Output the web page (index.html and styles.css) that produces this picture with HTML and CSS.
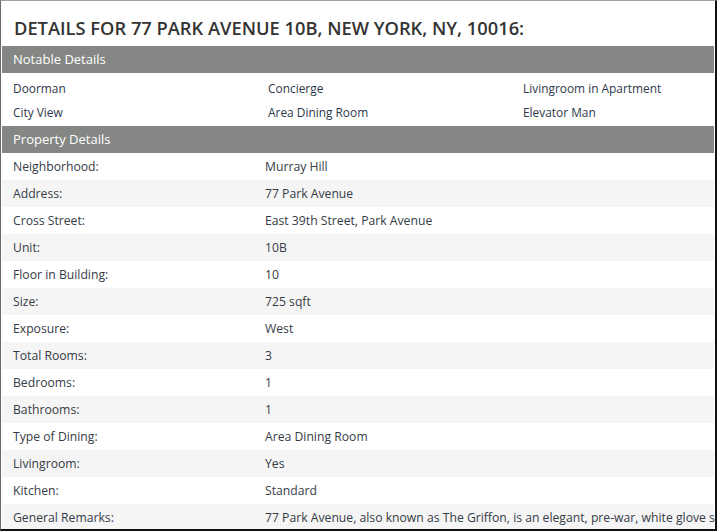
FILE: index.html
```html
<!DOCTYPE html>
<html>
<head>
<meta charset="utf-8">
<link rel="stylesheet" href="styles.css">
</head>
<body>
<div class="frame">
  <h1 class="title">DETAILS FOR 77 PARK AVENUE 10B, NEW YORK, NY, 10016:</h1>
  <div class="bar">Notable Details</div>
  <div class="notable">
    <div>Doorman</div><div>Concierge</div><div>Livingroom in Apartment</div>
    <div>City View</div><div>Area Dining Room</div><div>Elevator Man</div>
  </div>
  <div class="bar">Property Details</div>
  <div class="props">
    <div class="row"><div class="k">Neighborhood:</div><div class="v">Murray Hill</div></div>
    <div class="row"><div class="k">Address:</div><div class="v">77 Park Avenue</div></div>
    <div class="row"><div class="k">Cross Street:</div><div class="v">East 39th Street, Park Avenue</div></div>
    <div class="row"><div class="k">Unit:</div><div class="v">10B</div></div>
    <div class="row"><div class="k">Floor in Building:</div><div class="v">10</div></div>
    <div class="row"><div class="k">Size:</div><div class="v">725 sqft</div></div>
    <div class="row"><div class="k">Exposure:</div><div class="v">West</div></div>
    <div class="row"><div class="k">Total Rooms:</div><div class="v">3</div></div>
    <div class="row"><div class="k">Bedrooms:</div><div class="v">1</div></div>
    <div class="row"><div class="k">Bathrooms:</div><div class="v">1</div></div>
    <div class="row"><div class="k">Type of Dining:</div><div class="v">Area Dining Room</div></div>
    <div class="row"><div class="k">Livingroom:</div><div class="v">Yes</div></div>
    <div class="row"><div class="k">Kitchen:</div><div class="v">Standard</div></div>
    <div class="row"><div class="k">General Remarks:</div><div class="v">77 Park Avenue, also known as The Griffon, is an elegant, pre-war, white glove s</div></div>
  </div>
</div>
</body>
</html>
```
FILE: styles.css
```css
html, body {
  margin: 0;
  padding: 0;
  background: #fff;
}
.frame {
  box-sizing: border-box;
  width: 717px;
  height: 531px;
  border-left: 1px solid #6b6b6b;
  border-top: 1px solid #a0a0a0;
  border-right: 2px solid #111;
  border-bottom: 2px solid #111;
  padding: 0 1px 0 1px;
  overflow: hidden;
  font-family: "Open Sans", "Noto Sans", sans-serif;
  color: #3a4150;
}
.title {
  margin: 0;
  height: 45px;
  box-sizing: border-box;
  padding: 15px 0 0 12px;
  font-size: 18.3px;
  font-weight: 600;
  color: #333;
  line-height: 24px;
  white-space: nowrap;
}
.bar {
  height: 27px;
  line-height: 27px;
  background: #858784;
  color: #fff;
  font-size: 13px;
  padding-left: 11px;
}
.notable {
  display: grid;
  grid-template-columns: 255px 255px 255px;
  padding: 3px 0 2px 11px;
  font-size: 11.9px;
  color: #2e3a4c;
}
.notable > div {
  height: 24px;
  line-height: 24px;
  white-space: nowrap;
}
.props {
  font-size: 12.2px;
  color: #363c46;
}
.row {
  display: flex;
  height: 27px;
  line-height: 27px;
  white-space: nowrap;
}
.row:nth-child(even) {
  background: #f5f5f5;
}
.k {
  width: 263px;
  flex: none;
  padding-left: 11px;
  box-sizing: border-box;
}
.v {
  flex: 1;
}
```
